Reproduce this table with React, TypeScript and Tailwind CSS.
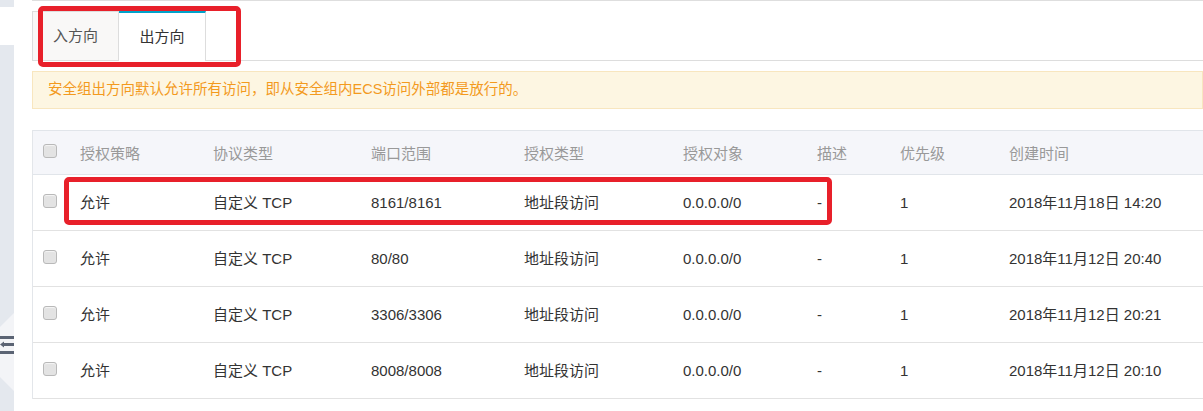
const cols = [
  { key: 'policy', label: '授权策略', w: 'w-[133px]' },
  { key: 'proto', label: '协议类型', w: 'w-[158px]' },
  { key: 'port', label: '端口范围', w: 'w-[153px]' },
  { key: 'type', label: '授权类型', w: 'w-[159px]' },
  { key: 'target', label: '授权对象', w: 'w-[134px]' },
  { key: 'desc', label: '描述', w: 'w-[83px]' },
  { key: 'prio', label: '优先级', w: 'w-[109px]' },
  { key: 'time', label: '创建时间', w: 'flex-1' },
]

const rows: Record<string, string>[] = [
  { policy: '允许', proto: '自定义 TCP', port: '8161/8161', type: '地址段访问', target: '0.0.0.0/0', desc: '-', prio: '1', time: '2018年11月18日 14:20' },
  { policy: '允许', proto: '自定义 TCP', port: '80/80', type: '地址段访问', target: '0.0.0.0/0', desc: '-', prio: '1', time: '2018年11月12日 20:40' },
  { policy: '允许', proto: '自定义 TCP', port: '3306/3306', type: '地址段访问', target: '0.0.0.0/0', desc: '-', prio: '1', time: '2018年11月12日 20:21' },
  { policy: '允许', proto: '自定义 TCP', port: '8008/8008', type: '地址段访问', target: '0.0.0.0/0', desc: '-', prio: '1', time: '2018年11月12日 20:10' },
]

function Checkbox() {
  return (
    <span className="-mt-[3px] block h-[14px] w-[14px] rounded-[3px] border border-[#b9b9b9] bg-[#e3e3e3] shadow-[inset_0_1px_1px_#f4f4f4]" />
  )
}

function SideStrip() {
  return (
    <div className="relative flex w-[14px] flex-col">
      <div className="h-[7px] bg-[#e4e8ee]" />
      <div className="h-[38px] bg-white" />
      <div className="flex-1 bg-[#e4e8ee]" />
      {/* collapse handle */}
      <svg className="absolute left-0 top-[313px]" width="14" height="78" viewBox="0 0 14 78">
        <polygon points="0,14 14,0 14,78 0,64" fill="#f3f4f7" />
        <rect x="0" y="23" width="14" height="3" fill="#5b6474" />
        <rect x="4" y="30" width="10" height="3" fill="#5b6474" />
        <polygon points="0,31.5 4,28.5 4,34.5" fill="#5b6474" />
        <rect x="0" y="38" width="14" height="3" fill="#5b6474" />
      </svg>
    </div>
  )
}

export default function App() {
  return (
    <div
      className="flex h-[411px] w-[1203px] overflow-hidden bg-white text-[15px] text-[#333]"
      style={{ fontFamily: '"Liberation Sans", "Noto Sans CJK SC", sans-serif' }}
    >
      <SideStrip />
      <div className="relative ml-[18px] flex flex-1 flex-col border-t border-[#dedede]">
        {/* tabs */}
        <div className="mt-[10px] flex h-[50px] border-b border-[#dddddd]">
          <div className="-mb-px flex w-[87px] items-center justify-center border border-[#dddddd] bg-[#f9f8f7] text-[#555]">
            入方向
          </div>
          <div className="-mb-px flex w-[87px] items-center justify-center border-r border-t-2 border-r-[#dddddd] border-t-[#00a2ca] bg-white text-[#333]">
            出方向
          </div>
        </div>

        {/* notice */}
        <div className="mt-[10px] flex h-[38px] items-center border border-[#f8e6bf] bg-[#fdf6e2] pl-[15px] text-[14.5px] text-[#f39a1e]">
          安全组出方向默认允许所有访问，即从安全组内ECS访问外部都是放行的。
        </div>

        {/* table */}
        <div className="mt-[21px] flex flex-col border-l border-[#e3e6ea]">
          <div className="flex h-[45px] items-center border-t border-b border-[#e1e5ea] bg-[#f5f6fa] text-[#999]">
            <div className="flex w-[47px] items-center pl-[10px]">
              <Checkbox />
            </div>
            {cols.map((c) => (
              <div key={c.key} className={`${c.w} pt-[4px]`}>
                {c.label}
              </div>
            ))}
          </div>
          {rows.map((r, i) => (
            <div key={i} className="flex h-[56px] items-center border-b border-[#e2e2e2]">
              <div className="flex w-[47px] items-center pl-[10px]">
                <Checkbox />
              </div>
              {cols.map((c) => (
                <div key={c.key} className={`${c.w} whitespace-nowrap pt-[2px]`}>
                  {r[c.key]}
                </div>
              ))}
            </div>
          ))}
        </div>

        {/* annotation boxes */}
        <div className="pointer-events-none absolute left-[6px] top-[5px] h-[61px] w-[203px] rounded-[5px] border-[5px] border-[#e8202a]" />
        <div className="pointer-events-none absolute left-[32px] top-[176px] h-[48px] w-[768px] rounded-[5px] border-[5px] border-[#e8202a]" />
      </div>
    </div>
  )
}
